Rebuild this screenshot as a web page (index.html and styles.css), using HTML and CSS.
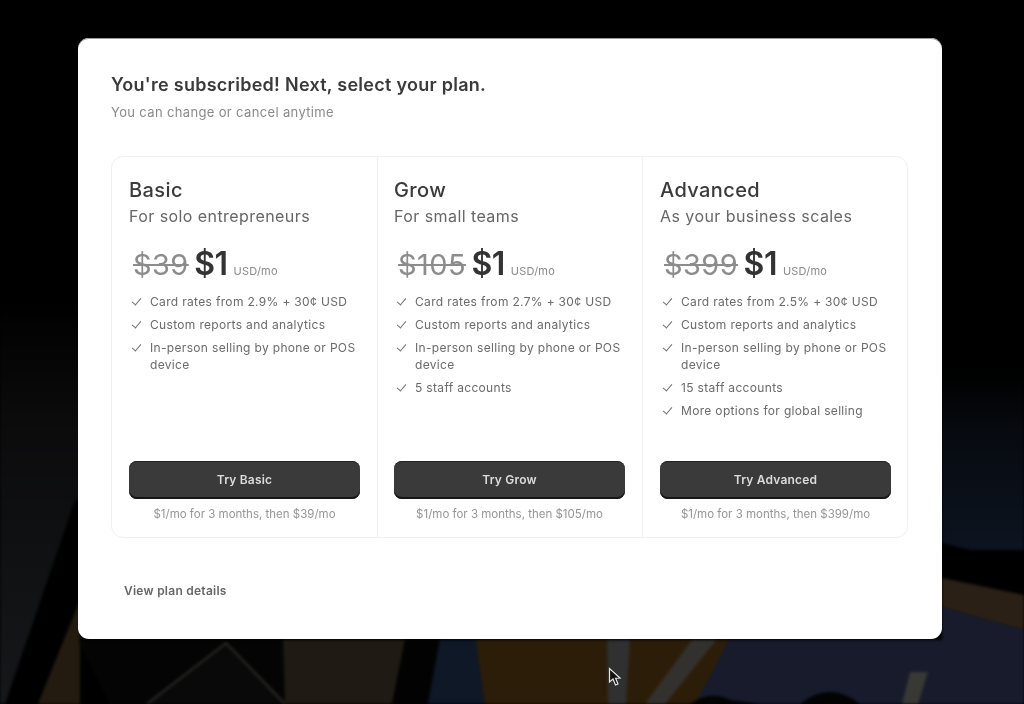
FILE: index.html
```html
<!DOCTYPE html>
<html lang="en">
<head>
<meta charset="utf-8">
<title>Select your plan</title>
<link rel="stylesheet" href="styles.css">
</head>
<body>
<svg class="backdrop" viewBox="0 0 1024 704" width="1024" height="704" aria-hidden="true">
  <defs>
    <linearGradient id="leftfade" x1="0" y1="0" x2="0" y2="1">
      <stop offset="0" stop-color="#000"/>
      <stop offset="0.3" stop-color="#0b0b0c"/>
      <stop offset="1" stop-color="#15171a"/>
    </linearGradient>
    <linearGradient id="rightfade" x1="0" y1="0" x2="0" y2="1">
      <stop offset="0" stop-color="#000"/>
      <stop offset="0.35" stop-color="#070a10"/>
      <stop offset="1" stop-color="#0c1420"/>
    </linearGradient>
  </defs>
  <rect width="1024" height="704" fill="#000"/>
  <rect x="0" y="300" width="80" height="404" fill="url(#leftfade)"/>
  <polygon points="75,500 80,500 80,704 38,704 5,704" fill="#000"/>
  <polygon points="38,704 80,600 80,704" fill="#241b10"/>
  <polygon points="110,704 78,640 285,640 285,704" fill="#040404"/>
  <polygon points="283,640 405,640 392,704 285,704" fill="#1f1a13"/>
  <polygon points="405,640 440,640 428,704 392,704" fill="#020202"/>
  <polygon points="440,640 1024,640 1024,704 428,704" fill="#171b2c"/>
  <polygon points="440,640 480,640 485,704 428,704" fill="#0f1826"/>
  <polygon points="476,640 729,640 695,704 485,704" fill="#2c1d08"/>
  <polygon points="607,640 630,640 626,704 608,704" fill="#303030"/>
  <polygon points="692,640 716,640 665,704 645,704" fill="#33312e"/>
  <rect x="942" y="370" width="82" height="180" fill="url(#rightfade)"/>
  <polygon points="942,543 1024,563 1024,595 942,578" fill="#000"/>
  <polygon points="942,578 1024,595 1024,630 942,607" fill="#2a2016"/>
  <polygon points="942,607 1024,630 1024,704 942,704" fill="#171b2c"/>
  <polygon points="910,672 928,672 918,704 902,704" fill="#383835"/>
  <path d="M147 704 L226 643 L285 704" fill="#090909" stroke="#2e2c28" stroke-width="2"/>
  <path d="M690 704 Q710 690 730 700 L760 704Z M800 704 Q830 680 860 704Z" fill="#030303"/>
</svg>
<main class="modal">
  <header class="head">
    <h1>You're subscribed! Next, select your plan.</h1>
    <p>You can change or cancel anytime</p>
  </header>
  <section class="plans">
    <article class="plan">
      <h2>Basic</h2>
      <p class="tag">For solo entrepreneurs</p>
      <div class="price"><s>$39</s><strong>$1</strong><span>USD/mo</span></div>
      <ul>
        <li>Card rates from 2.9% + 30¢ USD</li>
        <li>Custom reports and analytics</li>
        <li>In-person selling by phone or POS device</li>
      </ul>
      <button type="button">Try Basic</button>
      <p class="note">$1/mo for 3 months, then $39/mo</p>
    </article>
    <article class="plan">
      <h2>Grow</h2>
      <p class="tag">For small teams</p>
      <div class="price"><s>$105</s><strong>$1</strong><span>USD/mo</span></div>
      <ul>
        <li>Card rates from 2.7% + 30¢ USD</li>
        <li>Custom reports and analytics</li>
        <li>In-person selling by phone or POS device</li>
        <li>5 staff accounts</li>
      </ul>
      <button type="button">Try Grow</button>
      <p class="note">$1/mo for 3 months, then $105/mo</p>
    </article>
    <article class="plan">
      <h2>Advanced</h2>
      <p class="tag">As your business scales</p>
      <div class="price"><s>$399</s><strong>$1</strong><span>USD/mo</span></div>
      <ul>
        <li>Card rates from 2.5% + 30¢ USD</li>
        <li>Custom reports and analytics</li>
        <li>In-person selling by phone or POS device</li>
        <li>15 staff accounts</li>
        <li>More options for global selling</li>
      </ul>
      <button type="button">Try Advanced</button>
      <p class="note">$1/mo for 3 months, then $399/mo</p>
    </article>
  </section>
  <a class="details" href="#">View plan details</a>
</main>
<svg class="cursor" viewBox="0 0 14 20" width="14" height="20" aria-hidden="true">
  <path d="M1.5 1.5 V15 L5 12 L7.5 18 L10 17 L7.6 11.2 L12 11 Z" fill="#111" stroke="#e6e6e6" stroke-width="1.2"/>
</svg>
</body>
</html>
```

FILE: styles.css
```css
* { box-sizing: border-box; }
html, body { margin: 0; padding: 0; }
body {
  width: 1024px;
  height: 704px;
  position: relative;
  overflow: hidden;
  background: #000;
  font-family: Inter, "Liberation Sans", sans-serif;
  color: #303030;
  padding: 38px 82px 0 78px;
}
.backdrop { position: absolute; left: 0; top: 0; filter: blur(1.5px); }
.cursor { position: absolute; left: 608px; top: 667px; }
.modal {
  position: relative;
  width: 864px;
  height: 601px;
  background: #fff;
  border-radius: 11px;
  padding: 36px 34px 0 33px;
  box-shadow: inset 0 1px 0 #9a9a9a;
  filter: blur(0.35px);
}
.head h1 {
  margin: 0;
  font-size: 18px;
  line-height: 22px;
  font-weight: 600;
  letter-spacing: 0.27px;
  color: #3a3a3a;
}
.head p {
  margin: 6px 0 0;
  font-size: 13px;
  line-height: 20px;
  letter-spacing: 0.35px;
  color: #8a8a8a;
}
.plans {
  display: grid;
  grid-template-columns: repeat(3, 1fr);
  height: 382px;
  margin-top: 34px;
  border: 1px solid #f0f0f0;
  border-radius: 12px;
}
.plan {
  display: flex;
  flex-direction: column;
  padding: 21px 17px 0;
  border-left: 1px solid #f0f0f0;
  min-width: 0;
}
.plan:first-child { border-left: 0; }
.plan:nth-child(2) { padding-left: 16px; }
.plan:last-child { padding-right: 16px; }
.plan h2 {
  margin: 0;
  font-size: 20px;
  line-height: 25px;
  font-weight: 500;
  letter-spacing: 0.4px;
  color: #3a3a3a;
}
.tag {
  margin: 1px 0 0;
  font-size: 16px;
  line-height: 24px;
  letter-spacing: 0.43px;
  color: #666;
}
.price {
  display: flex;
  align-items: baseline;
  height: 38px;
  margin-top: 17px;
  padding-left: 4px;
}
.price s {
  font-size: 29px;
  line-height: 38px;
  letter-spacing: 0.4px;
  color: #8c8c8c;
  margin-right: 5.5px;
}
.price strong {
  font-size: 32px;
  line-height: 38px;
  font-weight: 600;
  color: #333;
  letter-spacing: -0.5px;
  margin-right: 6px;
}
.price span {
  font-size: 11px;
  letter-spacing: 0.2px;
  color: #8a8a8a;
}
ul {
  list-style: none;
  margin: 10px 0 0;
  padding: 0;
  flex: 1;
}
li {
  position: relative;
  padding-left: 21px;
  margin-bottom: 6px;
  font-size: 12px;
  line-height: 17px;
  letter-spacing: 0.33px;
  color: #6a6a6a;
}
li::before {
  content: "";
  position: absolute;
  left: 5px;
  top: 3px;
  width: 4px;
  height: 8px;
  border: solid #707070;
  border-width: 0 1.3px 1.3px 0;
  transform: rotate(40deg);
}
button {
  display: block;
  width: 100%;
  height: 38px;
  flex: none;
  border: 0;
  border-radius: 8px;
  background: #3a3a3a;
  box-shadow: inset 0 -2px 0 #151515, inset 0 1px 0 #222;
  color: #dcdcdc;
  font: 600 12px/36px Inter, "Liberation Sans", sans-serif;
  letter-spacing: 0.2px;
}
.note {
  margin: 7px 0 0;
  height: 31px;
  font-size: 11.5px;
  line-height: 16px;
  text-align: center;
  color: #959595;
}
.details {
  position: absolute;
  left: 46px;
  top: 545px;
  font-size: 12px;
  line-height: 16px;
  font-weight: 600;
  letter-spacing: 0.25px;
  color: #666;
  text-decoration: none;
}
```
